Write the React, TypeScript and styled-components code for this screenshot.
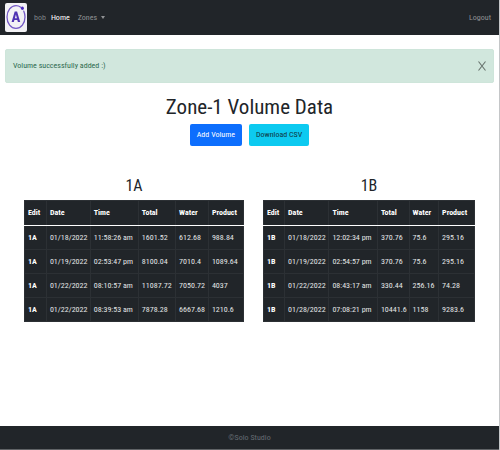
import React, { useState } from "react";
import styled, { createGlobalStyle } from "styled-components";

const Global = createGlobalStyle`
  *, *::before, *::after { box-sizing: border-box; }
  body {
    margin: 0;
    background: #fff;
    color: #212529;
    font-family: "Roboto Condensed", Roboto, "Noto Sans", sans-serif;
    font-size: 8px;
    line-height: 14px;
  }
`;

const Page = styled.div`
  min-height: 100vh;
  display: flex;
  flex-direction: column;
  border-right: 1px solid #c4c6c8;
`;

const Navbar = styled.nav`
  display: flex;
  align-items: center;
  height: 35px;
  padding: 0 8px 0 5px;
  background: #212529;
`;

const Brand = styled.a`
  display: flex;
  margin-right: 7px;
`;

const NavLink = styled.a<{ $active?: boolean }>`
  margin-right: 8px;
  color: ${(p) => (p.$active ? "#fff" : "#909294")};
  text-decoration: none;
`;

const UserName = styled.span`
  margin-right: 5px;
  color: #7c8287;
`;

const NavMenu = styled.button`
  display: flex;
  align-items: center;
  gap: 4px;
  padding: 0;
  border: 0;
  background: none;
  color: #909294;
  font: inherit;
  &::after {
    content: "";
    border: 2px solid transparent;
    border-top: 3px solid currentColor;
    border-bottom: 0;
  }
`;

const Logout = styled.a`
  margin-left: auto;
  color: #909294;
  text-decoration: none;
`;

const Alert = styled.div`
  display: flex;
  align-items: center;
  justify-content: space-between;
  height: 34px;
  margin: 14px 5px 0;
  padding: 0 7px;
  border: 1px solid #cee5da;
  border-radius: 2px;
  background: #d1e7dd;
  color: #2d6a4f;
`;

const Close = styled.button`
  display: flex;
  padding: 0;
  border: 0;
  background: none;
`;

const Main = styled.main`
  flex: 1;
  text-align: center;
`;

const Title = styled.h1`
  margin: 10px 0 3px;
  font-size: 21px;
  font-weight: 400;
  line-height: 28px;
`;

const Actions = styled.div`
  display: flex;
  justify-content: center;
  gap: 7px;
`;

const Button = styled.button<{ $info?: boolean }>`
  height: 22px;
  padding: 0 7px;
  border: 0;
  border-radius: 2px;
  background: ${(p) => (p.$info ? "#0dcaf0" : "#0d6efd")};
  color: ${(p) => (p.$info ? "#10353d" : "#fff")};
  font: inherit;
`;

const Tables = styled.div`
  display: flex;
  gap: 19px;
  margin-top: 30px;
  padding: 0 24px;
`;

const Panel = styled.section<{ $grow: number }>`
  flex: ${(p) => p.$grow} 1 0;
`;

const PanelTitle = styled.h2`
  margin: 0 0 4px;
  font-size: 16px;
  font-weight: 400;
  line-height: 20px;
`;

const Table = styled.table`
  width: 100%;
  table-layout: fixed;
  border-collapse: collapse;
  background: #212529;
  color: #e4e5e6;
  text-align: left;
  white-space: nowrap;
  th, td {
    height: 24px;
    padding: 0 0 0 3px;
    border: 1px solid #2c3034;
  }
  th { color: #fff; font-weight: 700; }
  thead th { height: 25px; border-bottom: 1px solid #fff; }
`;

const Col = styled.col<{ $w: number }>`
  width: ${(p) => p.$w}%;
`;

const Footer = styled.footer`
  display: flex;
  align-items: center;
  justify-content: center;
  height: 24px;
  border-bottom: 1px solid #606366;
  background: #212529;
  color: #656c73;
`;

type Row = [string, string, string, string, string];
type Zone = { name: string; grow: number; cols: number[]; rows: Row[] };

const headings = ["Edit", "Date", "Time", "Total", "Water", "Product"];

const zones: Zone[] = [
  {
    name: "1A",
    grow: 220,
    cols: [10, 20, 22, 17, 15, 16],
    rows: [
      ["01/18/2022", "11:58:26 am", "1601.52", "612.68", "988.84"],
      ["01/19/2022", "02:53:47 pm", "8100.04", "7010.4", "1089.64"],
      ["01/22/2022", "08:10:57 am", "11087.72", "7050.72", "4037"],
      ["01/22/2022", "08:39:53 am", "7878.28", "6667.68", "1210.6"],
    ],
  },
  {
    name: "1B",
    grow: 212,
    cols: [10, 21, 23, 15, 14, 17],
    rows: [
      ["01/18/2022", "12:02:34 pm", "370.76", "75.6", "295.16"],
      ["01/19/2022", "02:54:57 pm", "370.76", "75.6", "295.16"],
      ["01/22/2022", "08:43:17 am", "330.44", "256.16", "74.28"],
      ["01/28/2022", "07:08:21 pm", "10441.6", "1158", "9283.6"],
    ],
  },
];

function Logo() {
  return (
    <svg width="22" height="29" viewBox="0 0 22 29" aria-hidden="true">
      <rect width="22" height="29" rx="2" fill="#f3f2f5" />
      <path
        d="M15.8 4.2C14.4 3.2 12.8 2.6 11 2.6C6 2.6 2 7.6 2 14S6 25.4 11 25.4S20 20.4 20 14C20 11.8 19.5 9.8 18.8 8.2"
        fill="none"
        stroke="#7459c6"
        strokeWidth="1.3"
        strokeLinecap="round"
      />
      <ellipse cx="17.4" cy="5.2" rx="1.5" ry="1.8" fill="#4a2bc0" />
      <path
        d="M9.7 8.5H12.1L15.2 19H12.9L12.3 17H9.4L8.8 19H6.6ZM10.9 11.4L9.9 15.2H11.9Z"
        fill="#4f33b2"
        fillRule="evenodd"
      />
    </svg>
  );
}

function ZoneTable({ zone }: { zone: Zone }) {
  return (
    <Panel $grow={zone.grow}>
      <PanelTitle>{zone.name}</PanelTitle>
      <Table>
        <colgroup>
          {zone.cols.map((w, i) => (
            <Col key={i} $w={w} />
          ))}
        </colgroup>
        <thead>
          <tr>
            {headings.map((h) => (
              <th key={h} scope="col">{h}</th>
            ))}
          </tr>
        </thead>
        <tbody>
          {zone.rows.map((row, i) => (
            <tr key={i}>
              <th scope="row">{zone.name}</th>
              {row.map((cell, j) => (
                <td key={j}>{cell}</td>
              ))}
            </tr>
          ))}
        </tbody>
      </Table>
    </Panel>
  );
}

export default function App() {
  const [open, setOpen] = useState(true);
  return (
    <Page>
      <Global />
      <Navbar>
        <Brand href="#" aria-label="Start page"><Logo /></Brand>
        <UserName>bob</UserName>
        <NavLink href="#" $active>Home</NavLink>
        <NavMenu type="button" aria-haspopup="menu">Zones</NavMenu>
        <Logout href="#">Logout</Logout>
      </Navbar>
      {open && (
        <Alert role="alert">
          <span>Volume successfully added :)</span>
          <Close type="button" aria-label="Close" onClick={() => setOpen(false)}>
            <svg width="8" height="10" viewBox="0 0 8 10" fill="none" stroke="#68736e" strokeWidth="1.1">
              <path d="M0.5 0.5L7.5 9.5M7.5 0.5L0.5 9.5" />
            </svg>
          </Close>
        </Alert>
      )}
      <Main>
        <Title>Zone-1 Volume Data</Title>
        <Actions>
          <Button type="button">Add Volume</Button>
          <Button type="button" $info>Download CSV</Button>
        </Actions>
        <Tables>
          {zones.map((z) => (
            <ZoneTable key={z.name} zone={z} />
          ))}
        </Tables>
      </Main>
      <Footer>©Solo Studio</Footer>
    </Page>
  );
}
